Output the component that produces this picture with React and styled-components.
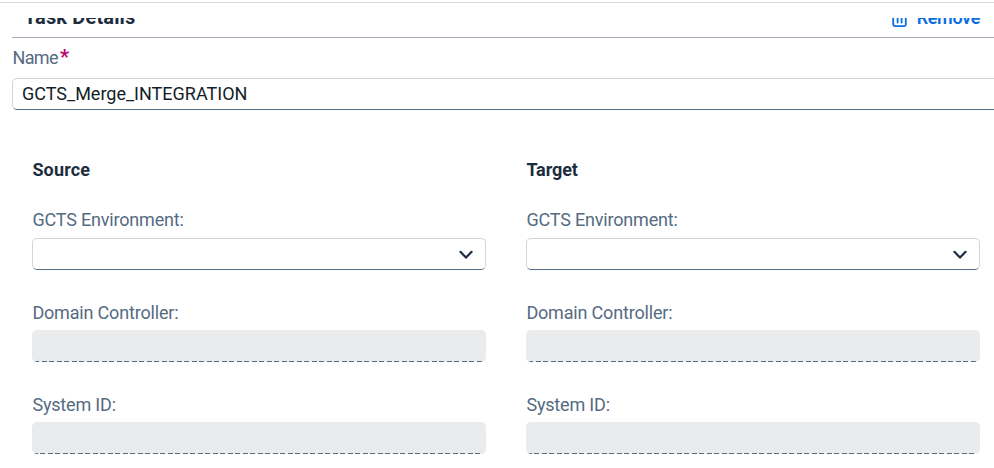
import React from "react";
import styled, { createGlobalStyle } from "styled-components";

const GlobalStyle = createGlobalStyle`
  *, *::before, *::after { box-sizing: border-box; }
  html, body { margin: 0; background: #fff; overflow: hidden; }
  body { font-family: Roboto, "Liberation Sans", sans-serif; font-size: 18px; color: #1d2d3e; }
  h2, h3 { margin: 0; font-size: inherit; }
`;

const Page = styled.main`
  width: 100vw;
  height: 468px;
  overflow: hidden;
  padding-top: 2px;
`;

const TopRule = styled.div`
  height: 1px;
  background: #d9dbe2;
`;

const Panel = styled.section`
  margin: 15px 0 0 12px;
`;

const Header = styled.header`
  height: 20px;
  overflow: hidden;
  display: flex;
  align-items: flex-end;
  justify-content: space-between;
  padding: 0 14px 8px 12px;
  border-bottom: 1px solid #a3adb9;
`;

const HeaderTitle = styled.h2`
  && { font-size: 20px; }
  font-weight: 700;
  line-height: 22px;
  padding-bottom: 1px;
  letter-spacing: 0.15px;
`;

const RemoveButton = styled.button`
  display: flex;
  align-items: center;
  gap: 10px;
  padding: 0;
  border: 0;
  background: none;
  color: #0a6ee0;
  font: 600 18px/22px Roboto, sans-serif;
  letter-spacing: -0.35px;
`;

const Label = styled.label`
  display: block;
  color: #556b82;
  line-height: 22px;
  white-space: nowrap;
  padding-left: 0.4px;
  letter-spacing: ${(p) => p.$spacing ?? -0.18}px;
`;

const Required = styled.span`
  color: #ba066c;
  font-size: 20px;
  line-height: 0;
  font-weight: 700;
  margin-left: 2px;
`;

const NameField = styled.div`
  padding-top: 9px;
`;

const TextInput = styled.input`
  display: block;
  width: calc(100% + 10px);
  height: 32px;
  margin-top: 9px;
  padding: 0 9px 2px;
  border: 1px solid #d0d5dc;
  border-bottom-color: #556b82;
  border-radius: 5px;
  outline: none;
  background: #fff;
  color: #131e29;
  font: 400 18px/28px Roboto, sans-serif;
`;

const Columns = styled.div`
  display: grid;
  grid-template-columns: 454px 454px;
  gap: 40px;
  padding: 49px 0 0 20px;
`;

const ColumnTitle = styled.h3`
  font-weight: 700;
  line-height: 22px;
  padding-left: 0.4px;
  letter-spacing: ${(p) => p.$spacing}px;
`;

const Field = styled.div`
  padding-top: ${(p) => p.$top}px;
`;

const Select = styled.div`
  display: flex;
  align-items: center;
  justify-content: flex-end;
  height: 32px;
  margin-top: 7px;
  padding: 2px 12px 0 0;
  border: 1px solid #d0d5dc;
  border-bottom-color: #556b82;
  border-radius: 5px;
`;

const ReadOnlyBox = styled.div`
  height: 32px;
  margin-top: 6px;
  border-radius: 5px;
  background:
    repeating-linear-gradient(90deg, #eaecee 0 ${(p) => p.$phase}px, #556b82 ${(p) => p.$phase}px ${(p) => p.$phase + 5}px, #eaecee ${(p) => p.$phase + 5}px 7.5px) 0 100% / 100% 1px no-repeat,
    #eaebed;
`;

const Chevron = () => (
  <svg width="14" height="10" viewBox="0 0 14 10" fill="none" aria-hidden="true">
    <path d="M1.4 1.8 7 7.6l5.6-5.8" stroke="#1d2d3e" strokeWidth="2.2" strokeLinecap="round" strokeLinejoin="round" />
  </svg>
);

const TrashIcon = () => (
  <svg width="15" height="20" viewBox="0 0 15 20" fill="none" stroke="#0a6ee0" strokeWidth="1.8" strokeLinecap="round" strokeLinejoin="round" aria-hidden="true">
    <path d="M1 4h13M4.5 4V1h6v3M1.2 4v12.6q0 1.5 1.5 1.5h9.6q1.5 0 1.5-1.5V4M5.6 7.5v7M9.6 7.5v7" />
  </svg>
);

const Side = ({ title, spacing }) => (
  <div>
    <ColumnTitle $spacing={spacing}>{title}</ColumnTitle>
    <Field $top={28}>
      <Label>GCTS Environment:</Label>
      <Select role="combobox"><Chevron /></Select>
    </Field>
    <Field $top={32}>
      <Label>Domain Controller:</Label>
      <ReadOnlyBox $phase={2.2} />
    </Field>
    <Field $top={32}>
      <Label>System ID:</Label>
      <ReadOnlyBox $phase={0.8} />
    </Field>
  </div>
);

export default function App() {
  return (
    <>
      <GlobalStyle />
      <Page>
        <TopRule />
        <Panel>
          <Header>
            <HeaderTitle>Task Details</HeaderTitle>
            <RemoveButton><TrashIcon />Remove</RemoveButton>
          </Header>
          <NameField>
            <Label $spacing={-0.6}>Name<Required>*</Required></Label>
            <TextInput defaultValue="GCTS_Merge_INTEGRATION" />
          </NameField>
          <Columns>
            <Side title="Source" spacing={0.15} />
            <Side title="Target" spacing={-0.1} />
          </Columns>
        </Panel>
      </Page>
    </>
  );
}
